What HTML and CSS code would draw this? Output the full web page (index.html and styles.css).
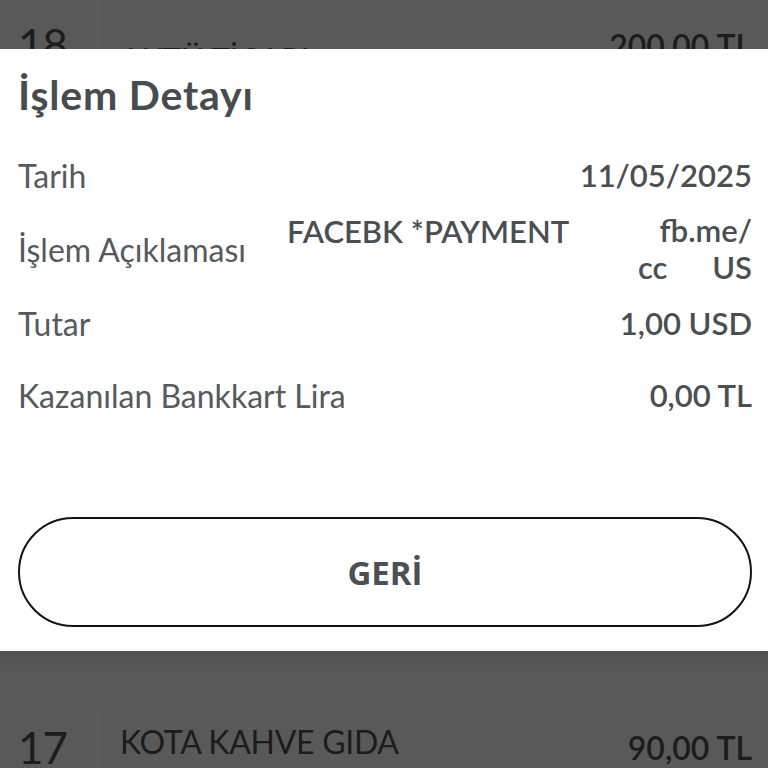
FILE: index.html
```html
<!DOCTYPE html>
<html lang="tr">
<head>
<meta charset="utf-8">
<link rel="stylesheet" href="styles.css">
</head>
<body>
<div class="screen">
  <div class="list-row top-row">
    <div class="row-num">18</div>
    <div class="row-name">AKTÜ TİCARI</div>
    <div class="row-amt">200,00 TL</div>
  </div>
  <div class="modal">
    <h1 class="title">İşlem Detayı</h1>
    <div class="detail-row">
      <div class="label">Tarih</div>
      <div class="value">11/05/2025</div>
    </div>
    <div class="detail-row desc-row">
      <div class="label">İşlem Açıklaması</div>
      <div class="desc-main">FACEBK *PAYMENT</div>
      <div class="desc-extra">
        <div class="desc-line1">fb.me/</div>
        <div class="desc-line2"><span>cc</span><span>US</span></div>
      </div>
    </div>
    <div class="detail-row">
      <div class="label">Tutar</div>
      <div class="value">1,00 USD</div>
    </div>
    <div class="detail-row">
      <div class="label">Kazanılan Bankkart Lira</div>
      <div class="value">0,00 TL</div>
    </div>
    <button class="back-btn">GERİ</button>
  </div>
  <div class="shadow-band"></div>
  <div class="list-row bottom-row">
    <div class="row-num">17</div>
    <div class="row-name">KOTA KAHVE GIDA</div>
    <div class="row-amt">90,00 TL</div>
  </div>
</div>
</body>
</html>
```
FILE: styles.css
```css
html, body {
  margin: 0;
  padding: 0;
  background: #595959;
  width: 768px;
  height: 768px;
  overflow: hidden;
  font-family: "Lato", "Open Sans", sans-serif;
}
.screen {
  display: flex;
  flex-direction: column;
  height: 768px;
}
.list-row {
  display: flex;
  color: #1c1c1c;
  padding: 0 16px 0 18px;
  flex: none;
}
.top-row {
  height: 49px;
  overflow: hidden;
  align-items: flex-start;
}
.row-num {
  width: 79px;
  font-size: 44px;
  line-height: 44px;
  border-right: 1px solid #5f5f5f;
  align-self: stretch;
  letter-spacing: -1px;
}
.top-row .row-num { padding-top: 22px; }
.row-name {
  flex: 1;
  padding-left: 22px;
  font-size: 32px;
  letter-spacing: -0.3px;
}
.top-row .row-name { padding-top: 40px; }
.row-amt {
  font-size: 32px;
  font-weight: 600;
}
.top-row .row-amt { padding-top: 26px; }
.modal {
  flex: none;
  background: #fff;
  height: 602px;
  padding: 0 16px 0 18px;
  box-sizing: border-box;
  color: #4a4f52;
  display: flex;
  flex-direction: column;
}
.title {
  margin: 0;
  font-size: 41px;
  font-weight: 700;
  line-height: 44px;
  padding-top: 24px;
  color: #474c4f;
  letter-spacing: 0.8px;
}
.detail-row {
  display: flex;
  justify-content: space-between;
  align-items: center;
  font-size: 32px;
}
.detail-row:nth-of-type(1) { margin-top: 38px; height: 40px; }
.label { color: #555a5d; font-weight: 400; }
.value { font-weight: 600; font-size: 31px; }
.desc-row {
  margin-top: 14px;
  height: 80px;
  align-items: center;
}
.desc-row .label { width: 269px; flex: none; }
.desc-main {
  flex: 1;
  align-self: flex-start;
  font-weight: 600;
  font-size: 31px;
  margin-top: 3px;
}
.desc-extra {
  width: 114px;
  font-weight: 600;
  font-size: 31px;
  text-align: right;
  line-height: 37px;
}
.desc-line2 { display: flex; justify-content: space-between; }
.detail-row:nth-of-type(3) { margin-top: 14px; height: 40px; }
.detail-row:nth-of-type(4) { margin-top: 32px; height: 40px; }
.back-btn {
  flex: none;
  margin-top: 102px;
  height: 110px;
  border: 2px solid #141414;
  border-radius: 56px;
  background: #fff;
  font-family: "Open Sans", sans-serif;
  font-weight: 700;
  font-size: 33px;
  color: #4a5053;
}
.shadow-band {
  flex: none;
  height: 22px;
  background: linear-gradient(#525252, #595959);
}
.bottom-row {
  flex: 1;
  align-items: flex-end;
}
.bottom-row .row-num { margin-top: 38px; padding-top: 14px; }
.bottom-row .row-name { padding-bottom: 8px; align-self: flex-end; }
.bottom-row .row-amt { padding-bottom: 2px; align-self: flex-end; }
```
